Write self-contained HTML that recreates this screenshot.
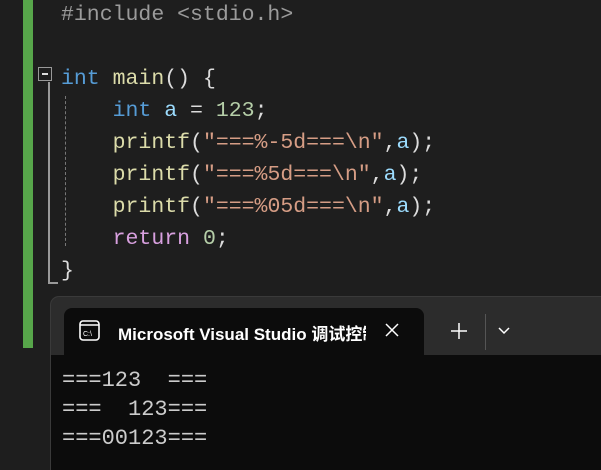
<!DOCTYPE html>
<html style="overflow:hidden;width:601px;height:470px"><head><style>
body{margin:0;width:601px;height:470px;background:#1e1e1e;overflow:hidden;position:relative;font-family:"Liberation Mono",monospace}
.g{position:absolute;left:23px;top:0;width:10px;height:348px;background:#57a64a}
.code{position:absolute;left:61px;top:-1px;font-size:21.5px;line-height:32px;color:#dcdcdc;white-space:pre}
.k{color:#569cd6}.f{color:#dcdcaa}.s{color:#d69d85}.n{color:#b5cea8}.v{color:#9cdcfe}.p{color:#9b9b9b}.r{color:#d8a0df}
.box{position:absolute;left:38px;top:67px;width:14px;height:14px;border:1px solid #999;box-sizing:border-box}
.box:after{content:"";position:absolute;left:3px;top:5px;width:6px;height:2px;background:#ddd}
.vl{position:absolute;left:48px;top:82px;width:2px;height:200px;background:#999}
.hl{position:absolute;left:48px;top:282px;width:10px;height:2px;background:#999}
.dl{position:absolute;left:65px;top:96px;height:150px;border-left:1px dashed #777}
.win{position:absolute;left:50px;top:296px;width:600px;height:180px;background:#2c2c2c;border-radius:9px 0 0 0;border-left:1px solid #3a3a3a;border-top:1px solid #3a3a3a}
.tab{position:absolute;left:64px;top:308px;width:360px;height:50px;background:#0c0c0c;border-radius:8px 8px 0 0}
.con{position:absolute;left:51px;top:355px;width:560px;height:120px;background:#0c0c0c}
.title{position:absolute;left:118px;top:320px;color:#fff;font:bold 17px "Liberation Sans","Noto Sans CJK SC",sans-serif;white-space:nowrap;width:248px;overflow:hidden}
.out{position:absolute;left:62px;top:366px;color:#cccccc;font-size:22px;line-height:29px;white-space:pre}
</style></head><body>
<div class="g"></div>
<div class="box"></div><div class="vl"></div><div class="hl"></div><div class="dl"></div>
<div class="code"><span class="p">#include &lt;stdio.h&gt;</span>

<span class="k">int</span> <span class="f">main</span>() {
    <span class="k">int</span> <span class="v">a</span> = <span class="n">123</span>;
    <span class="f">printf</span>(<span class="s">"===%-5d===\n"</span>,<span class="v">a</span>);
    <span class="f">printf</span>(<span class="s">"===%5d===\n"</span>,<span class="v">a</span>);
    <span class="f">printf</span>(<span class="s">"===%05d===\n"</span>,<span class="v">a</span>);
    <span class="r">return</span> <span class="n">0</span>;
}</div>
<div class="win"></div>
<div class="tab"></div>
<div class="con"></div>
<svg style="position:absolute;left:79px;top:320px" width="22" height="22" viewBox="0 0 22 22"><rect x="1" y="1" width="19" height="19" rx="3" fill="none" stroke="#fff" stroke-width="1.6"/><line x1="1" y1="5" x2="20" y2="5" stroke="#fff" stroke-width="1.4"/><text x="4" y="16" fill="#fff" font-size="7" font-family="Liberation Sans">C:\</text></svg>
<div class="title">Microsoft Visual Studio 调试控制台</div>
<svg style="position:absolute;left:384px;top:322px" width="16" height="16"><path d="M2 2L14 14M14 2L2 14" stroke="#fff" stroke-width="1.5"/></svg>
<svg style="position:absolute;left:450px;top:322px" width="18" height="18"><path d="M9 1V17M1 9H17" stroke="#fff" stroke-width="1.5"/></svg>
<div style="position:absolute;left:485px;top:314px;width:1px;height:36px;background:#555"></div>
<svg style="position:absolute;left:497px;top:326px" width="14" height="10"><path d="M2 2L7 7L12 2" stroke="#fff" stroke-width="1.5" fill="none"/></svg>
<div class="out">===123  ===
===  123===
===00123===</div>
</body></html>
